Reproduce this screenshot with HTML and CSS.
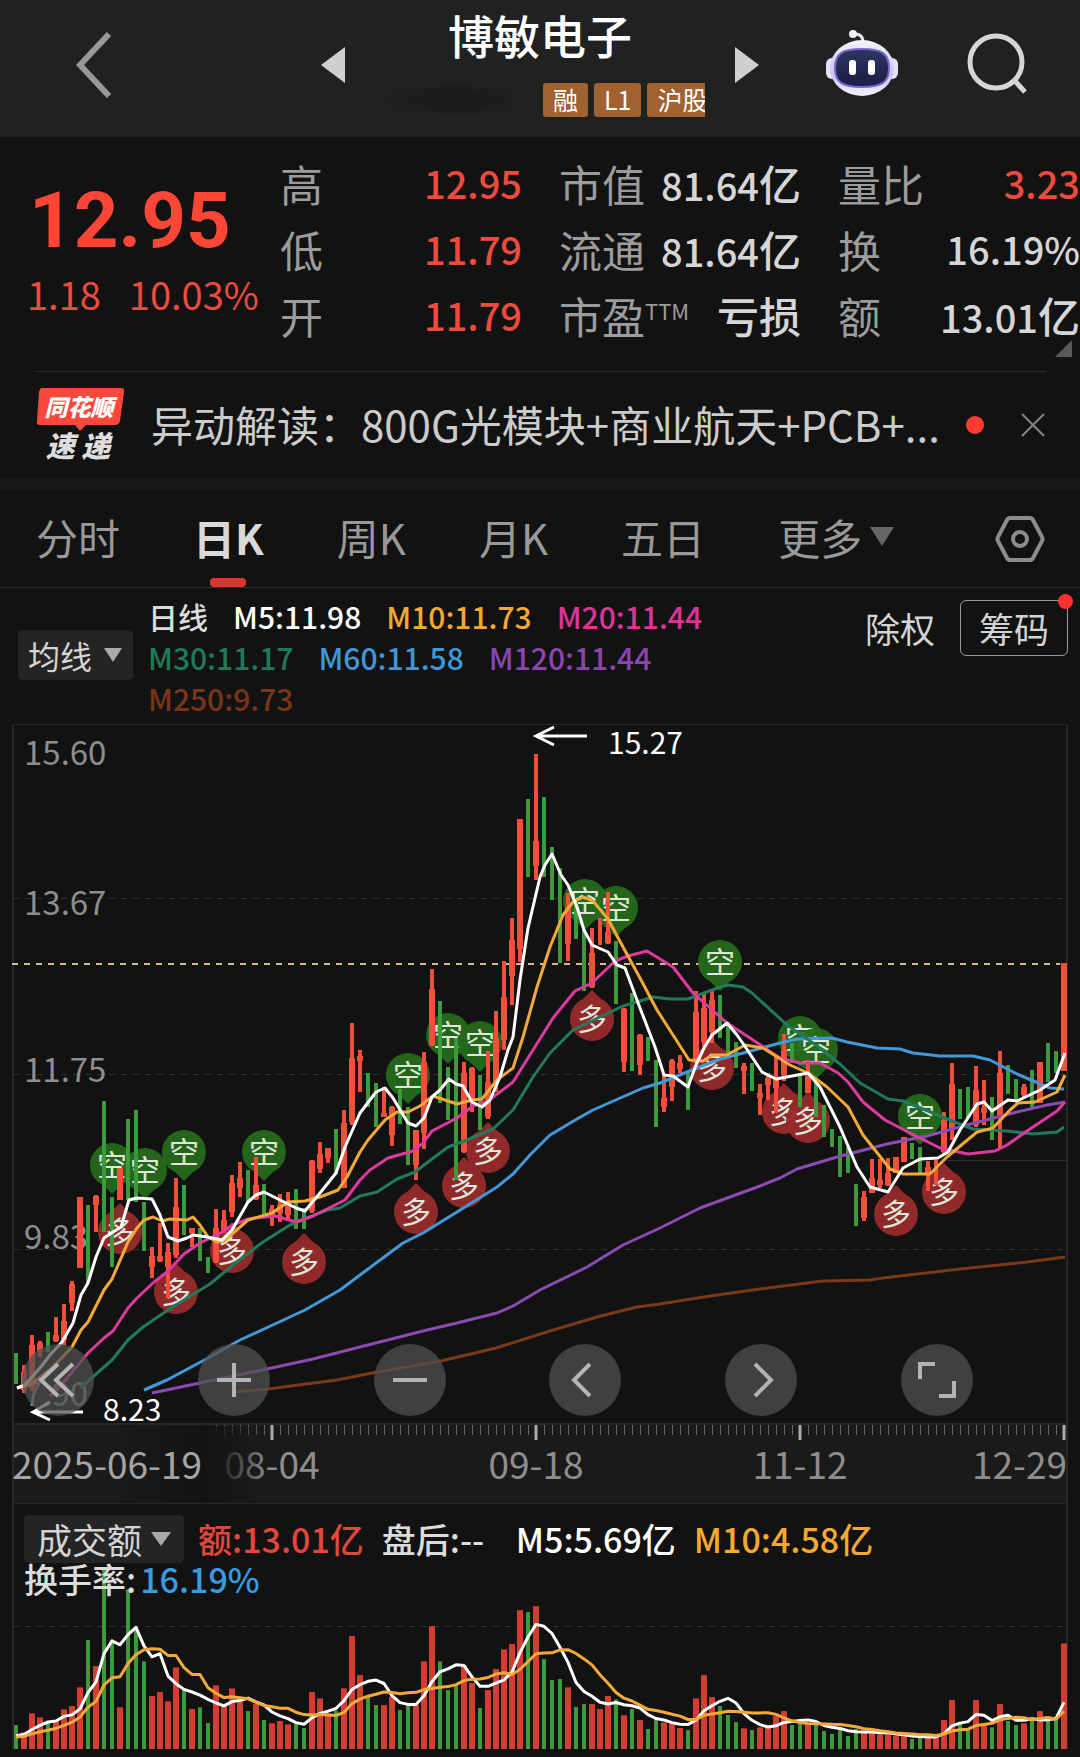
FILE: index.html
```
<!DOCTYPE html>
<html lang="zh-CN">
<head>
<meta charset="utf-8">
<meta name="viewport" content="width=device-width, initial-scale=1">
<title>博敏电子</title>
<link rel="stylesheet" href="styles.css">
</head>
<body>
<header class="topbar">
  <div class="topbar-left">
    <button class="icon-btn" aria-label="返回"><svg width="36" height="66" viewBox="0 0 36 66"><path d="M33 2 4 33 33 64" fill="none" stroke="#979999" stroke-width="6"/></svg></button>
  </div>
  <div class="switcher">
    <button class="icon-btn" aria-label="上一只"><svg width="24" height="36" viewBox="0 0 24 36"><path d="M0 18 24 0V36Z" fill="#cfcfcf"/></svg></button>
    <div class="stock">
      <h1 class="stock-name">博敏电子</h1>
      <div class="tags"><span class="smudge"></span><span class="tag">融</span><span class="tag">L1</span><span class="tag">沪股</span></div>
    </div>
    <button class="icon-btn" aria-label="下一只"><svg width="24" height="36" viewBox="0 0 24 36"><path d="M24 18 0 0V36Z" fill="#cfcfcf"/></svg></button>
  </div>
  <div class="topbar-right">
    <button class="icon-btn" aria-label="助手">
      <svg width="74" height="68" viewBox="0 0 74 68">
        <defs>
          <linearGradient id="shell" x1="0" y1="0" x2="0" y2="1"><stop offset="0" stop-color="#f4f3fc"/><stop offset=".6" stop-color="#c9c2ee"/><stop offset="1" stop-color="#f4f3fc"/></linearGradient>
          <linearGradient id="visor" x1="0" y1="0" x2="0" y2="1"><stop offset="0" stop-color="#2c3560"/><stop offset="1" stop-color="#1b1d45"/></linearGradient>
        </defs>
        <path d="M38 13Q38 5 30 5" fill="none" stroke="#e3e2f2" stroke-width="3"/><circle cx="28" cy="5" r="4" fill="#f0effa"/>
        <rect x="1" y="29" width="12" height="21" rx="6" fill="#e6e3f7"/><rect x="61" y="29" width="12" height="21" rx="6" fill="#e6e3f7"/>
        <ellipse cx="37" cy="39" rx="32" ry="28" fill="url(#shell)"/>
        <path d="M37 20C56 20 64 24 64 39S56 58 37 58 10 54 10 39 18 20 37 20Z" fill="url(#visor)" stroke="#7468cc" stroke-width="2"/>
        <rect x="24" y="31" width="7" height="15" rx="3" fill="#fff"/><rect x="43" y="31" width="7" height="15" rx="3" fill="#fff"/>
      </svg>
    </button>
    <button class="icon-btn" aria-label="搜索"><svg width="62" height="62" viewBox="0 0 62 62"><circle cx="30" cy="30" r="26" fill="none" stroke="#d6d6d6" stroke-width="5"/><path d="m48 48 11 12" stroke="#d6d6d6" stroke-width="5"/></svg></button>
  </div>
</header>

<main>
  <section class="quote">
    <div class="price">
      <div class="last">12.95</div>
      <div class="change"><span>1.18</span><span>10.03%</span></div>
    </div>
    <dl class="stats">
      <div class="stat"><dt>高</dt><dd class="up">12.95</dd></div>
      <div class="stat"><dt>市值</dt><dd>81.64<span class="unit">亿</span></dd></div>
      <div class="stat"><dt>量比</dt><dd class="up">3.23</dd></div>
      <div class="stat"><dt>低</dt><dd class="up">11.79</dd></div>
      <div class="stat"><dt>流通</dt><dd>81.64<span class="unit">亿</span></dd></div>
      <div class="stat"><dt>换</dt><dd>16.19%</dd></div>
      <div class="stat"><dt>开</dt><dd class="up">11.79</dd></div>
      <div class="stat"><dt>市盈<sup>TTM</sup></dt><dd><span class="unit">亏损</span></dd></div>
      <div class="stat"><dt>额</dt><dd>13.01<span class="unit">亿</span></dd></div>
    </dl>
    <span class="expand"></span>
  </section>

  <section class="news">
    <svg class="news-logo" width="90" height="76" viewBox="0 0 90 76">
      <path d="M6 1H85Q89 1 88 5L84 34Q83 38 79 38H50L44 44 39 38H4Q0 38 1 34L3 5Q4 1 6 1Z" fill="#f8483c"/>
      <text x="43" y="29" class="logo-top">同花顺</text>
      <text x="42" y="70" class="logo-bottom">速 递</text>
    </svg>
    <a class="news-link" href="#">异动解读：800G光模块+商业航天+PCB+...</a>
    <span class="news-dot"></span>
    <button class="icon-btn" aria-label="关闭"><svg width="26" height="26" viewBox="0 0 26 26"><path d="m2 2 22 22M24 2 2 24" stroke="#858585" stroke-width="2"/></svg></button>
  </section>

  <nav class="tabs">
    <a href="#" class="tab">分时</a>
    <a href="#" class="tab active" aria-current="page">日K</a>
    <a href="#" class="tab">周K</a>
    <a href="#" class="tab">月K</a>
    <a href="#" class="tab">五日</a>
    <a href="#" class="tab more">更多<svg width="24" height="19" viewBox="0 0 24 19"><path d="M0 0H24L12 19Z" fill="#666"/></svg></a>
    <button class="icon-btn settings" aria-label="设置"><svg width="50" height="48" viewBox="0 0 50 48"><path d="M15 3H35Q37 3 38 5L47 22Q48 24 47 26L38 43Q37 45 35 45H15Q13 45 12 43L3 26Q2 24 3 22L12 5Q13 3 15 3Z" fill="none" stroke="#8c8c8c" stroke-width="4"/><circle cx="25" cy="24" r="7" fill="none" stroke="#8c8c8c" stroke-width="4"/></svg></button>
  </nav>

  <section class="legend">
    <button class="picker small">均线<svg width="18" height="14" viewBox="0 0 18 14"><path d="M0 0H18L9 14Z" fill="#aaa"/></svg></button>
    <div class="averages">
      <span class="c-label">日线</span><span class="c-m5">M5:11.98</span><span class="c-m10">M10:11.73</span><span class="c-m20">M20:11.44</span>
      <span class="c-m30">M30:11.17</span><span class="c-m60">M60:11.58</span><span class="c-m120">M120:11.44</span>
      <span class="c-m250">M250:9.73</span>
    </div>
    <button class="plain">除权</button>
    <button class="chips">筹码<span class="badge"></span></button>
  </section>

  <section class="kline">
    <svg id="kline" class="chart" viewBox="0 724 1080 780" role="img" aria-label="日K线图"></svg>
    <div class="controls">
      <button class="round" aria-label="最左"><svg viewBox="0 0 72 72"><path d="M36 20 19 36 36 52M51 20 34 36 51 52"/></svg></button>
      <button class="round" aria-label="放大"><svg viewBox="0 0 72 72"><path d="M19 36H53M36 19V53"/></svg></button>
      <button class="round" aria-label="缩小"><svg viewBox="0 0 72 72"><path d="M19 36H53"/></svg></button>
      <button class="round" aria-label="左移"><svg viewBox="0 0 72 72"><path d="M41 20 25 36 41 52"/></svg></button>
      <button class="round" aria-label="右移"><svg viewBox="0 0 72 72"><path d="M30 20 46 36 30 52"/></svg></button>
      <button class="round" aria-label="全屏"><svg viewBox="0 0 72 72"><path d="M19 35V20H34M53 37V52H38"/></svg></button>
    </div>
  </section>

  <section class="volume">
    <svg id="volume" class="chart" viewBox="0 0 1080 252" role="img" aria-label="成交额"></svg>
    <div class="volume-head">
      <div class="volume-row">
        <button class="picker">成交额<svg width="20" height="14" viewBox="0 0 20 14"><path d="M0 0H20L10 14Z" fill="#aaa"/></svg></button>
        <span class="c-amount">额:13.01亿</span><span class="c-label after">盘后:--</span><span class="c-m5">M5:5.69亿</span><span class="c-m10">M10:4.58亿</span>
      </div>
      <div class="turnover"><span class="c-label">换手率:</span><span class="c-rate">16.19%</span></div>
    </div>
  </section>
</main>
<script src="script.js"></script>
</body>
</html>
```
FILE: styles.css
```
* { box-sizing: border-box; }
body {
  margin: 0;
  background: #121212;
  color: #d4d4d4;
  font-family: "Noto Sans CJK SC", Roboto, sans-serif;
  overflow-x: hidden;
}
button { font: inherit; color: inherit; background: none; border: 0; padding: 0; margin: 0; }
svg { display: block; }
a { color: inherit; text-decoration: none; }
.icon-btn { display: flex; flex: none; }

/* top bar */
.topbar {
  display: grid;
  grid-template-columns: 1fr 438px 1fr;
  height: 137px;
  background: #1f2221;
}
.topbar-left { display: flex; align-items: center; padding: 0 0 8px 76px; }
.switcher { display: flex; align-items: center; justify-content: space-between; padding-bottom: 8px; }
.stock { width: 330px; padding-bottom: 5px; }
.stock-name { margin: 0 0 22px; font-size: 46px; line-height: 54px; font-weight: 500; color: #fff; text-align: center; }
.tags { display: flex; gap: 6px; height: 34px; overflow: hidden; }
.tag {
  flex: none;
  padding: 0 10px;
  border-radius: 3px;
  background: #a06230;
  color: #fff;
  font-size: 25px;
  line-height: 32px;
}
.smudge {
  flex: none;
  width: 136px;
  margin-right: 26px;
  background: radial-gradient(ellipse at 60% 50%, #1b1d1c 30%, #1f2221 75%);
}
.topbar-right { display: flex; align-items: center; justify-content: space-between; padding: 0 52px 11px 66px; }

/* quote */
.quote { position: relative; display: flex; padding: 13px 0 23px 27px; }
.price { flex: none; width: 253px; padding-top: 32px; color: #fd4635; }
.last { padding-left: 2px; font-family: Roboto, sans-serif; font-size: 78px; line-height: 78px; font-weight: 700; }
.change { display: flex; gap: 28px; margin-top: 14px; font-size: 38px; line-height: 40px; color: #ee4a3e; white-space: nowrap; }
.stats { flex: 1; display: grid; grid-template-columns: repeat(3, 1fr); column-gap: 37px; margin: 0; }
.stat { display: flex; justify-content: space-between; height: 66px; line-height: 66px; white-space: nowrap; }
.stat dt { font-size: 43px; color: #9c9c9c; }
.stat dd { margin: 0; font-size: 38px; font-weight: 500; color: #d6d6d6; }
.stat dd.up { color: #ee4a3e; }
.unit { font-size: 42px; }
.stat sup { font-size: 22px; line-height: 22px; vertical-align: 14px; }
.expand {
  position: absolute;
  right: 8px;
  bottom: 14px;
  border-left: 17px solid transparent;
  border-bottom: 17px solid #5a5a5a;
}

/* news */
.news {
  display: flex;
  align-items: center;
  height: 107px;
  margin: 0 34px 0 36px;
  border-top: 1px solid #2c2c2c;
}
.news-logo { flex: none; margin-right: 25px; overflow: visible; }
.logo-top, .logo-bottom { fill: #fff; font-weight: 900; font-style: italic; text-anchor: middle; }
.logo-top { font-size: 23px; }
.logo-bottom { font-size: 29px; fill: #ddd; }
.news-link { flex: 1; padding-bottom: 3px; font-size: 42px; line-height: 56px; color: #ccc; white-space: nowrap; }
.news-dot { flex: none; width: 18px; height: 18px; margin-right: 36px; border-radius: 50%; background: #fe3b30; }

/* period tabs */
.tabs {
  display: flex;
  align-items: center;
  gap: 73px;
  height: 110px;
  padding: 0 35px 0 36px;
  border-top: 12px solid #171717;
  border-bottom: 1px solid #2e2e2e;
  color: #999;
  font-size: 42px;
  line-height: 93px;
}
.tab { position: relative; padding-bottom: 4px; white-space: nowrap; }
.tab.active { color: #d9d9d9; font-weight: 700; }
.tab.active::after {
  content: "";
  position: absolute;
  left: 50%;
  bottom: 0;
  width: 36px;
  height: 9px;
  margin-left: -18px;
  border-radius: 4px;
  background: #dc3432;
}
.tab.more { display: flex; align-items: center; gap: 8px; }
.settings { margin-left: auto; }

/* moving averages */
.legend { display: flex; align-items: flex-start; height: 136px; padding: 8px 12px 0 18px; }
.picker {
  display: flex;
  align-items: center;
  gap: 9px;
  height: 48px;
  padding: 0 13px;
  border-radius: 5px;
  background: #242424;
  font-size: 35px;
  line-height: 46px;
  white-space: nowrap;
}
.picker.small { height: 50px; margin: 34px 15px 0 0; padding: 0 11px 0 10px; gap: 12px; font-size: 32px; line-height: 48px; }
.averages {
  display: flex;
  flex-wrap: wrap;
  align-content: flex-start;
  column-gap: 25px;
  flex: 0 1 600px;
  font-size: 30px;
  font-weight: 500;
  line-height: 41px;
}
.plain { margin: 12px 25px 0 auto; font-size: 35px; line-height: 40px; }
.chips {
  position: relative;
  height: 56px;
  margin-top: 4px;
  padding: 0 18px;
  border: 1px solid #999;
  border-radius: 6px;
  font-size: 35px;
  line-height: 52px;
}
.badge { position: absolute; top: -7px; right: -6px; width: 15px; height: 15px; border-radius: 50%; background: #ff3030; }
.c-label { color: #dcdcdc; font-weight: 500; }
.c-m5 { color: #fff; }
.c-m10 { color: #f5a930; }
.c-m20 { color: #dc3597; }
.c-m30 { color: #20795a; }
.c-m60 { color: #4097d8; }
.c-m120 { color: #8a46ad; }
.c-m250 { color: #7a3519; }
.c-amount { color: #e2473e; }
.c-rate { color: #379ce0; }

/* charts */
.chart { width: 100%; height: auto; }
.frame { fill: none; stroke: #262626; stroke-width: 2; }
.grid { stroke: #303030; stroke-width: 1; stroke-dasharray: 6 6; }
.level { stroke: #303030; stroke-width: 1; }
.current { stroke: #d8b890; stroke-width: 2; stroke-dasharray: 6 6; }
.rise { fill: #f24e3c; }
.fall { fill: #3c9a3a; }
.vol-rise { fill: #d03e34; }
.line { fill: none; stroke-width: 3; stroke-linejoin: round; }
.s-m5 { stroke: #fff; }
.s-m10 { stroke: #f3a93a; }
.s-m20 { stroke: #dd3a9e; }
.s-m30 { stroke: #207a5c; }
.s-m60 { stroke: #4398d8; }
.s-m120 { stroke: #8a4bb2; }
.s-m250 { stroke: #7a3a1a; }
.pin-short { fill: #266a1c; }
.pin-long { fill: #972b2c; }
.pin-text { fill: #dfe6da; font-size: 30px; text-anchor: middle; }
.scale { fill: #8e8e8e; font-size: 33px; }
.extreme { fill: #fff; font-size: 30px; }
.arrow { fill: none; stroke: #fff; stroke-width: 3; }
.axis-band { fill: #1a1a1a; }
.tick { stroke: #666; stroke-width: 1; }
.tick-major { stroke: #aaa; stroke-width: 3; }
.date { fill: #8e8e8e; font-size: 37px; }
.date.first { fill: #a5a5a5; }

.kline { position: relative; }
.controls { position: absolute; left: 22px; right: 107px; bottom: 88px; display: flex; justify-content: space-between; }
.round { width: 72px; height: 72px; border-radius: 50%; background: rgba(82, 82, 82, 0.72); }
.round path { fill: none; stroke: #b4b4b4; stroke-width: 4; }

.volume { display: grid; overflow: hidden; }
.volume > * { grid-area: 1 / 1; }
.volume-head { padding: 11px 0 0 24px; font-size: 34px; }
.volume-row { display: flex; align-items: center; height: 48px; column-gap: 18px; font-weight: 500; line-height: 48px; white-space: nowrap; }
.volume-row .picker { margin-right: -4px; font-weight: 400; }
.after { min-width: 116px; }
.turnover { display: flex; column-gap: 4px; font-weight: 500; line-height: 32px; }
```
FILE: script.js
```
const X0 = 16, STEP = 8;

// direction, high, low, body top, body bottom (body omitted when it fills the range)
const candles = `g 1353 1384|r 1365 1393 1372 1390|r 1335 1391 1345 1388|r 1341 1357 1343 1352|g 1332 1352|r 1317 1342 1335 1341|r 1304 1345 1321 1340|r 1281 1311 1284 1303|R 1197 1268|g 1205 1283|r 1195 1232 1196 1205|g 1101 1232|g 1197 1267|R 1168 1200|g 1119 1200|g 1110 1202|g 1202 1251|r 1247 1278 1256 1267|r 1223 1262 1256 1261|r 1243 1298 1252 1267|r 1178 1258 1207 1255|g 1185 1235|r 1228 1247 1228 1233|g 1228 1261|g 1257 1273|r 1209 1263 1228 1262|r 1210 1233 1220 1230|r 1175 1217 1183 1212|r 1162 1197 1178 1188|g 1170 1203|r 1157 1200 1185 1199|g 1184 1214|r 1205 1226 1209 1215|r 1194 1222 1205 1213|r 1192 1220 1203 1215|g 1189 1229|g 1208 1229|r 1160 1213 1161 1211|r 1142 1173 1154 1169|r 1148 1163 1148 1158|g 1129 1174|r 1110 1188 1123 1188|r 1023 1125 1058 1122|r 1050 1092 1056 1061|g 1073 1107|g 1083 1127|r 1087 1117 1113 1117|r 1106 1146 1107 1135|g 1089 1124|g 1107 1165|r 1130 1180 1130 1165|r 1052 1149 1062 1133|r 969 1046 989 1045|g 1001 1103|g 1067 1120|g 1038 1180|r 1062 1153 1073 1152|r 1067 1112 1068 1100|g 1075 1130|r 1051 1119 1082 1117|r 1011 1092 1038 1083|r 961 1050 997 1040|r 918 1005 940 976|r 819 962 819 949|g 799 877|r 754 880 841 866|g 797 877|g 847 900|g 868 963|r 893 961 907 944|g 900 939|g 930 991|r 928 988 953 987|r 918 945|r 892 944 932 943|g 941 1004|r 1008 1072 1009 1062|g 993 1071|r 1034 1075 1035 1065|g 1037 1061|g 1060 1127|r 1075 1112 1098 1107|r 1059 1101 1061 1087|r 1055 1073 1063 1069|g 1071 1110|r 991 1063 1012 1060|r 993 1047 1008 1042|r 990 1043 1000 1032|g 995 1038|g 1022 1053|g 1042 1068|r 1063 1094 1066 1071|g 1063 1091|r 1084 1115 1093 1098|r 1073 1100 1078 1085|r 1057 1113 1077 1088|r 1034 1081 1050 1075|g 1043 1063|g 1073 1107|r 1060 1093 1073 1093|g 1082 1117|g 1105 1137|g 1129 1147|g 1136 1177|g 1147 1173|g 1184 1226|r 1191 1221 1197 1218|r 1159 1193 1178 1193|r 1159 1188 1180 1185|r 1158 1186 1173 1185|R 1157 1173|R 1137 1162|g 1143 1159|g 1147 1173|r 1161 1191 1167 1175|r 1160 1185|r 1112 1155 1120 1152|r 1063 1140 1084 1130|g 1089 1119|g 1087 1118|r 1066 1127 1090 1125|r 1080 1125 1108 1113|g 1097 1140|r 1051 1149 1073 1118|g 1065 1094|g 1079 1100|r 1084 1097 1087 1095|g 1070 1107|R 1062 1103|g 1043 1082|g 1051 1073|R 963 1071`.split('|').map(s => s.split(' '));

const averages = {
  m250: '233,1392 268,1389 337,1380 372,1373 441,1361 496,1348 550,1331 597,1317 637,1307 660,1304 710,1296 760,1289 823,1281 870,1280 883,1278 960,1269 1027,1262 1065,1257',
  m120: '152,1393 200,1383 267,1369 313,1359 360,1347 427,1330 457,1323 497,1313 513,1306 540,1290 587,1267 623,1245 660,1228 700,1208 760,1186 780,1178 797,1169 837,1157 887,1144 927,1136 967,1125 1013,1113 1047,1105 1065,1102',
  m60: '144,1390 167,1380 210,1357 240,1340 277,1323 305,1310 340,1290 360,1275 403,1243 423,1233 457,1212 497,1187 513,1174 530,1155 550,1135 577,1119 593,1110 643,1088 660,1083 687,1072 720,1059 747,1052 780,1043 797,1039 832,1038 847,1042 877,1048 900,1049 913,1053 940,1056 973,1056 990,1060 1017,1074 1050,1088 1064,1089',
  m30: '80,1388 87,1382 112,1360 128,1340 143,1327 168,1310 187,1298 210,1284 233,1265 263,1242 290,1225 327,1210 340,1208 360,1196 377,1192 397,1179 415,1172 432,1159 448,1147 467,1140 493,1129 513,1110 533,1077 550,1053 573,1030 600,1017 623,1006 640,1001 653,997 670,999 688,999 720,987 728,985 743,987 752,993 787,1025 813,1043 840,1064 860,1083 888,1099 903,1101 933,1113 957,1123 973,1129 1007,1131 1033,1134 1057,1132 1064,1127',
  m20: '50,1396 63,1383 88,1353 104,1338 113,1331 128,1308 137,1298 153,1283 168,1271 184,1254 200,1243 217,1235 233,1225 248,1219 275,1216 296,1222 313,1216 345,1200 360,1180 370,1170 388,1158 413,1151 423,1143 432,1131 457,1118 473,1106 488,1101 513,1082 533,1050 553,1018 575,991 592,983 615,961 628,956 647,951 673,967 693,993 727,1023 747,1036 780,1058 800,1063 820,1063 838,1073 848,1082 863,1102 885,1120 910,1133 940,1148 968,1154 995,1151 1007,1145 1027,1131 1057,1111 1065,1102',
  m10: '17,1388 30,1385 52,1368 72,1347 81,1330 88,1322 104,1290 112,1279 128,1242 137,1228 144,1220 153,1217 162,1221 170,1219 187,1220 193,1217 200,1225 208,1237 217,1242 224,1241 248,1220 272,1213 288,1202 305,1201 320,1197 338,1190 347,1177 360,1152 368,1140 385,1120 397,1112 408,1112 420,1106 433,1096 457,1104 472,1100 482,1099 497,1080 513,1068 523,1037 537,987 550,947 563,915 573,902 583,897 593,901 608,919 623,947 640,978 657,1010 673,1035 689,1060 703,1061 713,1055 727,1055 745,1045 763,1048 790,1065 808,1073 827,1087 848,1107 863,1135 890,1169 903,1174 930,1174 947,1157 977,1132 993,1128 1010,1110 1018,1103 1035,1102 1057,1092 1065,1075',
  m5: '17,1388 25,1385 40,1368 50,1355 62,1342 73,1323 81,1295 88,1283 96,1257 104,1238 113,1232 121,1227 129,1200 137,1198 152,1199 160,1215 168,1237 178,1241 187,1238 193,1235 207,1237 222,1240 232,1230 248,1202 256,1195 264,1192 280,1200 296,1208 305,1211 320,1193 336,1173 345,1147 360,1113 376,1092 385,1088 393,1098 408,1123 416,1126 424,1118 432,1097 440,1090 449,1079 456,1084 463,1086 472,1102 482,1107 490,1100 500,1077 508,1050 513,1037 520,980 528,928 540,877 545,865 552,854 561,875 568,885 577,907 584,930 592,945 608,952 617,965 625,968 640,1008 655,1047 664,1075 673,1076 688,1087 696,1065 704,1048 712,1035 727,1023 737,1035 744,1045 762,1072 776,1079 808,1073 820,1087 840,1127 857,1167 870,1187 888,1192 903,1168 920,1159 938,1158 948,1152 960,1130 977,1104 984,1102 992,1111 1008,1100 1017,1101 1040,1090 1055,1080 1065,1053'
};

const shortPins = [[112,1165],[145,1170],[184,1152],[264,1152],[408,1075],[448,1035],[480,1043],[585,901],[616,908],[720,962],[800,1038],[816,1050],[920,1116]];
const longPins = [[120,1232],[176,1292],[232,1251],[304,1262],[416,1212],[464,1186],[488,1151],[592,1019],[712,1068],[784,1112],[808,1121],[896,1214],[944,1192]];

const rect = (x, y, w, h, c) => `<rect x="${x}" y="${y}" width="${w}" height="${h}" class="${c}"/>`;
const seg = (x1, y1, x2, y2, c) => `<line x1="${x1}" y1="${y1}" x2="${x2}" y2="${y2}" class="${c}"/>`;
const text = (x, y, t, c, anchor = 'start') => `<text x="${x}" y="${y}" class="${c}" text-anchor="${anchor}">${t}</text>`;

function pin([x, y], isShort) {
  const d = isShort ? 1 : -1;
  return `<g class="${isShort ? 'pin-short' : 'pin-long'}" opacity=".95"><circle cx="${x}" cy="${y}" r="22"/><path d="M${x - 10} ${y + 19 * d}L${x} ${y + 29 * d}L${x + 10} ${y + 19 * d}Z"/></g>`
    + text(x, y + 11, isShort ? '空' : '多', 'pin-text', 'middle');
}

function drawKline() {
  let s = '<defs><linearGradient id="fade" x1="0" x2="1"><stop offset="0" stop-color="#121212" stop-opacity="0"/><stop offset=".55" stop-color="#131313"/><stop offset=".75" stop-color="#151515" stop-opacity=".7"/><stop offset="1" stop-color="#1a1a1a" stop-opacity="0"/></linearGradient></defs>';
  s += rect(13, 1424, 1054, 80, 'axis-band');
  [898, 1074, 1249].forEach(y => { s += seg(13, y + 0.5, 1067, y + 0.5, 'grid'); });
  s += seg(947, 1160.5, 1067, 1160.5, 'level');
  s += '<path class="frame" d="M13 1504V724H1067V1504M13 1424H1067M13 1504H1067"/>';
  s += seg(12, 964, 1060, 964, 'current');
  [[15.60, 765], [13.67, 915], [11.75, 1082], [9.83, 1249], [7.90, 1406]].forEach(([v, y]) => { s += text(24, y, v.toFixed(2), 'scale'); });
  shortPins.forEach(p => { s += pin(p, true); });
  longPins.forEach(p => { s += pin(p, false); });
  candles.forEach(([dir, hi, lo, top, bottom], i) => {
    const x = X0 + STEP * i;
    const cls = dir === 'g' ? 'fall' : 'rise';
    if (dir === 'R') { s += rect(x - 3, hi, 6, lo - hi, cls); return; }
    s += rect(x - 2, hi, 4, lo - hi, cls);
    if (top) s += rect(x - 3, top, 6, bottom - top, cls);
  });
  for (const k in averages) s += `<polyline points="${averages[k]}" class="line s-${k}"/>`;
  s += '<path class="arrow" d="M587 736H536M554 727 536 736 554 745M83 1412H33M50 1402 33 1412 50 1420"/>';
  s += text(608, 754, '15.27', 'extreme') + text(103, 1421, '8.23', 'extreme');
  for (let x = 216; x <= 1064; x += 8) s += seg(x + 0.5, 1425, x + 0.5, 1435, 'tick');
  [272, 536, 800, 1064].forEach(x => { s += seg(x, 1425, x, 1440, 'tick-major'); });
  s += text(272, 1479, '08-04', 'date', 'middle') + text(536, 1479, '09-18', 'date', 'middle') + text(800, 1479, '11-12', 'date', 'middle') + text(1067, 1479, '12-29', 'date', 'end');
  s += '<rect x="120" y="1426" width="150" height="76" fill="url(#fade)"/>';
  s += text(12, 1479, '2025-06-19', 'date first');
  document.getElementById('kline').innerHTML = s;
}

const turnover = `g72 r50 r107 r95 g82 r87 r119 r129 r185 g327 r249 g542 g322 r125 g479 g359 g263 r159 r171 r143 r245 g177 r120 g125 g78 r191 r135 r182 r142 g114 r135 g87 r77 r84 r74 g75 g63 r171 r152 r107 g115 r182 r339 r222 g159 g132 r132 r157 g117 g132 r132 r263 r369 g263 g177 g192 r252 r198 g123 r177 r240 r299 r315 r417 g411 r429 g270 g207 g210 r185 g126 g135 r135 r120 r159 g149 r101 g120 r87 g60 g90 r80 r80 r63 g57 r152 r222 r156 g129 g102 g81 r62 g57 r65 r65 r99 r114 g72 g77 r75 g75 g54 g45 g60 g39 g60 r50 r50 r42 r45 r39 r39 g30 g35 r39 r39 r87 r147 g77 g62 r147 r75 g65 r135 g84 g72 r77 g87 r114 g90 g92 r317`.split(' ');

function drawVolume() {
  const k = 0.333, base = 245, prior = 32;
  const amounts = turnover.map(v => +v.slice(1));
  const mean = n => amounts.map((_, i) => {
    let sum = 0;
    for (let j = i - n + 1; j <= i; j++) sum += j < 0 ? prior : amounts[j];
    return `${X0 + STEP * i},${(base - sum / n * k).toFixed(1)}`;
  }).join(' ');
  let s = seg(13, 122.5, 1067, 122.5, 'grid') + '<path class="frame" d="M13 0V245M1067 0V245"/>';
  turnover.forEach((v, i) => {
    const h = amounts[i] * k, isFall = v[0] === 'g', w = isFall ? 4 : 6;
    s += rect(X0 + STEP * i - w / 2, base - h, w, h, isFall ? 'fall' : 'vol-rise');
  });
  s += `<polyline points="${mean(5)}" class="line s-m5"/><polyline points="${mean(10)}" class="line s-m10"/>`;
  document.getElementById('volume').innerHTML = s;
}

drawKline();
drawVolume();
```
